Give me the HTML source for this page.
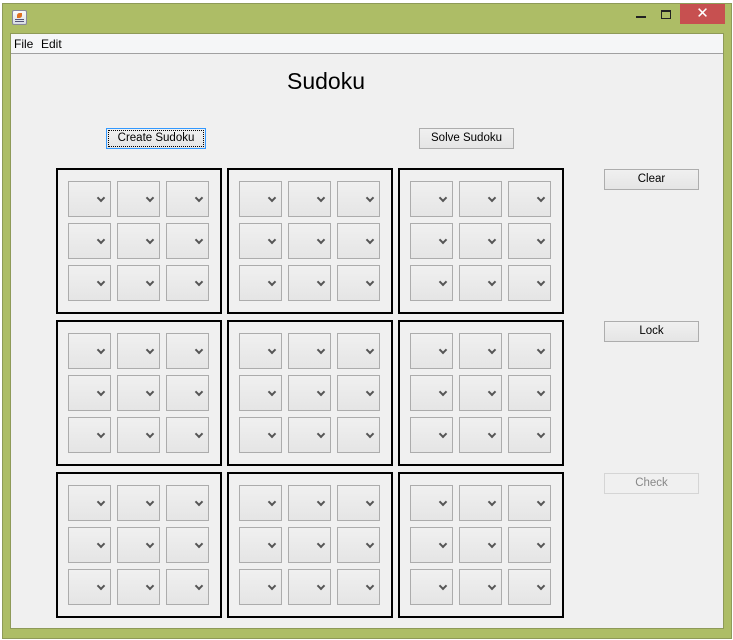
<!DOCTYPE html>
<html><head><style>
*{margin:0;padding:0;box-sizing:border-box}
body{width:733px;height:640px;background:#f0f0f0;position:relative;overflow:hidden;font-family:"Liberation Sans",sans-serif;font-size:12px}
.frame{position:absolute;left:2px;top:3px;width:730px;height:636px;background:#adbd66;border:1px solid #8e9a58}
.client{position:absolute;left:10px;top:33px;width:714px;height:596px;background:#f0f0f0;border:1px solid #8e9a58}
.menu{position:absolute;left:0;top:0;width:100%;height:20px;background:#f5f6f7;border-bottom:1px solid #a0a0a0}
.menu span{position:absolute;top:3px;font-size:12px;color:#000}
.btn{position:absolute;height:21px;border:1px solid #adadad;background:linear-gradient(#f0f0f0,#e5e5e5);text-align:center;line-height:19px;font-size:11.5px;color:#000}
.blk{position:absolute;width:166px;height:146px;border:2px solid #000;background:#f0f0f0}
.c{position:absolute;width:43px;height:36px;border:1px solid #acacac;background:linear-gradient(#f0f0f0,#e5e5e5)}
.c:after{content:"";position:absolute;left:29px;top:13px;width:4px;height:4px;border-right:2px solid #555;border-bottom:2px solid #555;transform:rotate(45deg)}
.x0{left:10px}.x1{left:59px}.x2{left:108px}.y0{top:11px}.y1{top:53px}.y2{top:95px}
</style></head><body>
<div style="position:absolute;left:0;top:0;width:733px;height:640px;background:#fff"></div>
<div class="frame"></div>
<div style="position:absolute;left:12px;top:10px;width:15px;height:15px;border:1px solid #889;background:linear-gradient(#fafafa,#d8dde4);border-radius:2px"><div style="position:absolute;left:4px;top:2px;width:5px;height:5px;background:#e07020;border-radius:50% 0"></div><div style="position:absolute;left:2px;top:8px;width:9px;height:3px;border-bottom:1px solid #557;border-top:1px solid #557"></div></div>
<div style="position:absolute;left:636px;top:16px;width:10px;height:2px;background:#222"></div>
<div style="position:absolute;left:661px;top:10px;width:10px;height:9px;border:1px solid #222;border-top-width:2px"></div>
<div style="position:absolute;left:680px;top:4px;width:45px;height:20px;background:#c75050;color:#fff;text-align:center;font-size:15px;line-height:20px">✕</div>
<div class="client">
<div class="menu"><span style="left:3px">File</span><span style="left:30px">Edit</span></div>
<div style="position:absolute;left:0;width:100%;top:34px;font-size:23px;color:#000"><span style="position:absolute;left:276px">Sudoku</span></div>
<div class="btn" style="left:95px;top:94px;width:100px;border-color:#3399ff;outline:1px dotted #000;outline-offset:-3px">Create Sudoku</div>
<div class="btn" style="left:408px;top:94px;width:95px">Solve Sudoku</div>
<div class="btn" style="left:593px;top:135px;width:95px">Clear</div>
<div class="btn" style="left:593px;top:287px;width:95px">Lock</div>
<div class="btn" style="left:593px;top:439px;width:95px;color:#888;border-color:#d5d5d5;background:#f0f0f0">Check</div>
</div>
<div style="position:absolute;left:0;top:0">
<div class="blk" style="left:56px;top:168px"><div class="c x0 y0"></div><div class="c x1 y0"></div><div class="c x2 y0"></div><div class="c x0 y1"></div><div class="c x1 y1"></div><div class="c x2 y1"></div><div class="c x0 y2"></div><div class="c x1 y2"></div><div class="c x2 y2"></div></div>
<div class="blk" style="left:227px;top:168px"><div class="c x0 y0"></div><div class="c x1 y0"></div><div class="c x2 y0"></div><div class="c x0 y1"></div><div class="c x1 y1"></div><div class="c x2 y1"></div><div class="c x0 y2"></div><div class="c x1 y2"></div><div class="c x2 y2"></div></div>
<div class="blk" style="left:398px;top:168px"><div class="c x0 y0"></div><div class="c x1 y0"></div><div class="c x2 y0"></div><div class="c x0 y1"></div><div class="c x1 y1"></div><div class="c x2 y1"></div><div class="c x0 y2"></div><div class="c x1 y2"></div><div class="c x2 y2"></div></div>
<div class="blk" style="left:56px;top:320px"><div class="c x0 y0"></div><div class="c x1 y0"></div><div class="c x2 y0"></div><div class="c x0 y1"></div><div class="c x1 y1"></div><div class="c x2 y1"></div><div class="c x0 y2"></div><div class="c x1 y2"></div><div class="c x2 y2"></div></div>
<div class="blk" style="left:227px;top:320px"><div class="c x0 y0"></div><div class="c x1 y0"></div><div class="c x2 y0"></div><div class="c x0 y1"></div><div class="c x1 y1"></div><div class="c x2 y1"></div><div class="c x0 y2"></div><div class="c x1 y2"></div><div class="c x2 y2"></div></div>
<div class="blk" style="left:398px;top:320px"><div class="c x0 y0"></div><div class="c x1 y0"></div><div class="c x2 y0"></div><div class="c x0 y1"></div><div class="c x1 y1"></div><div class="c x2 y1"></div><div class="c x0 y2"></div><div class="c x1 y2"></div><div class="c x2 y2"></div></div>
<div class="blk" style="left:56px;top:472px"><div class="c x0 y0"></div><div class="c x1 y0"></div><div class="c x2 y0"></div><div class="c x0 y1"></div><div class="c x1 y1"></div><div class="c x2 y1"></div><div class="c x0 y2"></div><div class="c x1 y2"></div><div class="c x2 y2"></div></div>
<div class="blk" style="left:227px;top:472px"><div class="c x0 y0"></div><div class="c x1 y0"></div><div class="c x2 y0"></div><div class="c x0 y1"></div><div class="c x1 y1"></div><div class="c x2 y1"></div><div class="c x0 y2"></div><div class="c x1 y2"></div><div class="c x2 y2"></div></div>
<div class="blk" style="left:398px;top:472px"><div class="c x0 y0"></div><div class="c x1 y0"></div><div class="c x2 y0"></div><div class="c x0 y1"></div><div class="c x1 y1"></div><div class="c x2 y1"></div><div class="c x0 y2"></div><div class="c x1 y2"></div><div class="c x2 y2"></div></div>
</div>
</body></html>
